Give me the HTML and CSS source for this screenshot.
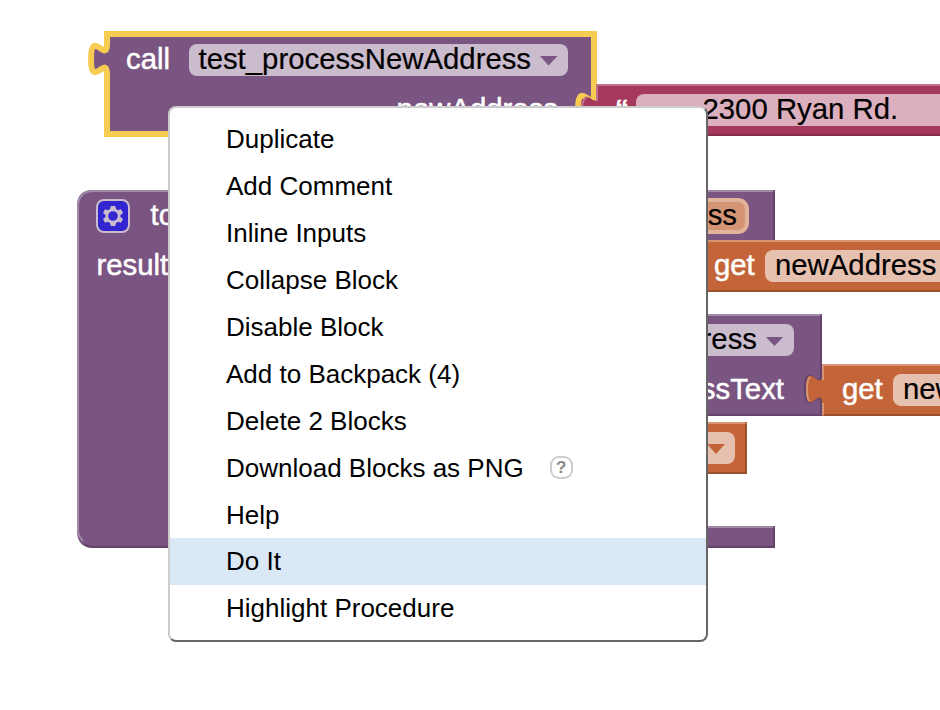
FILE: index.html
```html
<!DOCTYPE html>
<html lang="en">
<head>
<meta charset="utf-8">
<title>Blocks</title>
<link rel="stylesheet" href="styles.css">
</head>
<body>
<main class="workspace">
  <svg class="canvas" width="940" height="710" viewBox="0 0 940 710">
    <!-- procedure definition -->
    <g>
      <path class="purple" d="M93 190H775V240H700V526H775V548H94Q77 548 77 531V206Q77 190 93 190Z"/>
      <path class="hi-purple" d="M78 531V207Q78 191 94 191H773M78 530Q78 536 83 541M690 527H773"/>
      <path class="lo-purple" d="M774 192V240M774 528V547H94Q88 547 84 544"/>
      <rect class="gear-box" x="97" y="200" width="32" height="32" rx="7"/>
      <g transform="translate(113 216)">
        <path class="gear" fill-rule="evenodd" d="M-2.2-10H2.2L3-6.9L5.1-5.7L8-6.7L10-2.9L7.5-1V1L10 2.9L8 6.7L5.1 5.7L3 6.9L2.2 10H-2.2L-3 6.9L-5.1 5.7L-8 6.7L-10 2.9L-7.5 1V-1L-10-2.9L-8-6.7L-5.1-5.7L-3-6.9ZM4.8 0A4.8 4.8 0 1 0-4.8 0A4.8 4.8 0 1 0 4.8 0Z"/>
      </g>
      <text class="label" x="150.500" y="225">to</text>
      <text class="label" x="96.500" y="275">result</text>
      <rect class="param" x="582" y="200" width="165" height="32" rx="9"/>
      <text class="value end" x="737" y="225">newAddress</text>
    </g>

    <!-- variable getter -->
    <g>
      <path class="orange" d="M690 240H940V292H690Z"/>
      <path class="hi-orange" d="M690 241H940"/>
      <path class="lo-orange" d="M690 291H940"/>
      <text class="label" x="714" y="275">get</text>
      <rect class="field" x="765" y="250" width="220" height="32" rx="8"/>
      <text class="value" x="775" y="275">newAddress</text>
    </g>

    <!-- nested call -->
    <g>
      <path class="purple" d="M600 314H822V416H600Z"/>
      <path class="hi-purple" d="M600 315H820"/>
      <path class="lo-purple" d="M821 316V415H600"/>
      <rect class="field" x="600" y="324" width="194" height="32" rx="8"/>
      <text class="value end" x="757" y="349">Address</text>
      <path class="purple" d="M766 337H783L774.500 346Z"/>
      <text class="label end" x="784" y="399">addressText</text>
      <path class="socket" d="M821 374c0 20-16-16-16 15s16-5 16 15"/>
      <path class="orange" d="M822 364H940V416H822V404c0-20-16 16-16-15s16 5 16-15Z"/>
      <path class="hi-orange" d="M940 365H823V380M823 403V415M810 377Q807 380 807 389Q807 397 809 401"/>
      <path class="lo-orange" d="M824 415H940"/>
      <text class="label" x="842" y="399">get</text>
      <rect class="field" x="893" y="374" width="90" height="32" rx="8"/>
      <text class="value" x="903" y="399">newAddress</text>
    </g>

    <!-- variable getter with dropdown -->
    <g>
      <path class="orange" d="M650 422H747V474H650Z"/>
      <path class="hi-orange" d="M650 423H745"/>
      <path class="lo-orange" d="M746 424V473H650"/>
      <rect class="field" x="660" y="432" width="75" height="32" rx="8"/>
      <path class="orange" d="M707 444H725L716 454Z"/>
    </g>

    <!-- text literal -->
    <g>
      <path class="pink" d="M596 84H940V136H596V124c0-20-16 16-16-15s16 5 16-15Z"/>
      <path class="hi-pink" d="M940 85H597V101"/>
      <path class="lo-pink" d="M596 135H940"/>
      <text class="label quote" x="615" y="119">“</text>
      <rect class="field" x="636" y="94" width="350" height="32" rx="8"/>
      <text class="value" x="702.500" y="119">2300 Ryan Rd.</text>
    </g>

    <!-- selected call -->
    <g>
      <path class="purple selected" d="M107 34H594V94c0 20-16-16-16 15s16-5 16 15V134H107V74c0-20-16 16-16-15s16 5 16-15Z"/>
      <path class="pink" d="M597 94V124H588Q581 118 582 106Q584 94 590 98Q595 102 597 100Z"/>
      <path class="hi-pink" d="M597 84V101M582 107Q583 98 587 97"/>
      <text class="label" x="126" y="69">call</text>
      <rect class="field" x="189" y="44" width="379" height="32" rx="8"/>
      <text class="value" x="198.500" y="69">test_processNewAddress</text>
      <path class="purple" d="M540 56H557.500L548.500 65.500Z"/>
      <text class="label end" x="558" y="118.500">newAddress</text>
    </g>
  </svg>

  <ul class="menu">
    <li class="item">Duplicate</li>
    <li class="item">Add Comment</li>
    <li class="item">Inline Inputs</li>
    <li class="item">Collapse Block</li>
    <li class="item">Disable Block</li>
    <li class="item">Add to Backpack (4)</li>
    <li class="item">Delete 2 Blocks</li>
    <li class="item">Download Blocks as PNG <span class="help">?</span></li>
    <li class="item short">Help</li>
    <li class="item active">Do It</li>
    <li class="item">Highlight Procedure</li>
  </ul>
</main>
</body>
</html>
```

FILE: styles.css
```css
body {
  margin: 0;
  background: #fff;
  font-family: "Liberation Sans", Arial, sans-serif;
}

.workspace {
  position: relative;
  width: 940px;
  height: 710px;
  overflow: hidden;
}

.canvas {
  display: block;
}

.purple { fill: #7a5582; }
.orange { fill: #c36538; }
.pink { fill: #a5395c; }

.selected {
  stroke: #f7cc53;
  stroke-width: 6;
}

.hi-purple, .lo-purple, .hi-orange, .lo-orange, .hi-pink, .lo-pink, .socket {
  fill: none;
  stroke-width: 2;
}

.hi-purple { stroke: #a289a8; }
.lo-purple, .socket { stroke: #624468; }
.hi-orange { stroke: #d59474; }
.lo-orange { stroke: #9c512d; }
.hi-pink { stroke: #c0748d; }
.lo-pink { stroke: #842e4a; }

.field {
  fill: #fff;
  fill-opacity: .6;
}

.param {
  fill: #d59474;
  stroke: #e2b49c;
  stroke-width: 4;
}

.gear-box {
  fill: #3224cf;
  stroke: #cabbcd;
  stroke-width: 2;
}

.gear { fill: #cabbcd; }

.label, .value {
  font-size: 29.33px;
}

.label {
  fill: #fff;
  stroke: #fff;
  stroke-width: .5;
}

.value {
  fill: #000;
  stroke: #000;
  stroke-width: .2;
}

.end { text-anchor: end; }

.quote { font-weight: bold; font-size: 28px; }

.menu {
  position: absolute;
  left: 168px;
  top: 106px;
  box-sizing: border-box;
  width: 540px;
  height: 536px;
  margin: 0;
  padding: 8px 0;
  list-style: none;
  background: #fff;
  border: 2px solid;
  border-color: #ccc #666 #666 #ccc;
  border-radius: 8px;
}

.item {
  display: flex;
  align-items: center;
  height: 47px;
  padding-left: 56px;
  font-size: 26px;
  line-height: 47px;
  color: #000;
  white-space: nowrap;
}

.short {
  height: 46px;
  line-height: 46px;
}

.active { background: #dae7f4; }

.help {
  box-sizing: border-box;
  width: 23px;
  height: 23px;
  margin: -2px 0 0 26px;
  border: 2px solid #ccc;
  border-radius: 9px;
  color: #888;
  font-size: 17px;
  font-weight: bold;
  line-height: 19px;
  text-align: center;
}
```
